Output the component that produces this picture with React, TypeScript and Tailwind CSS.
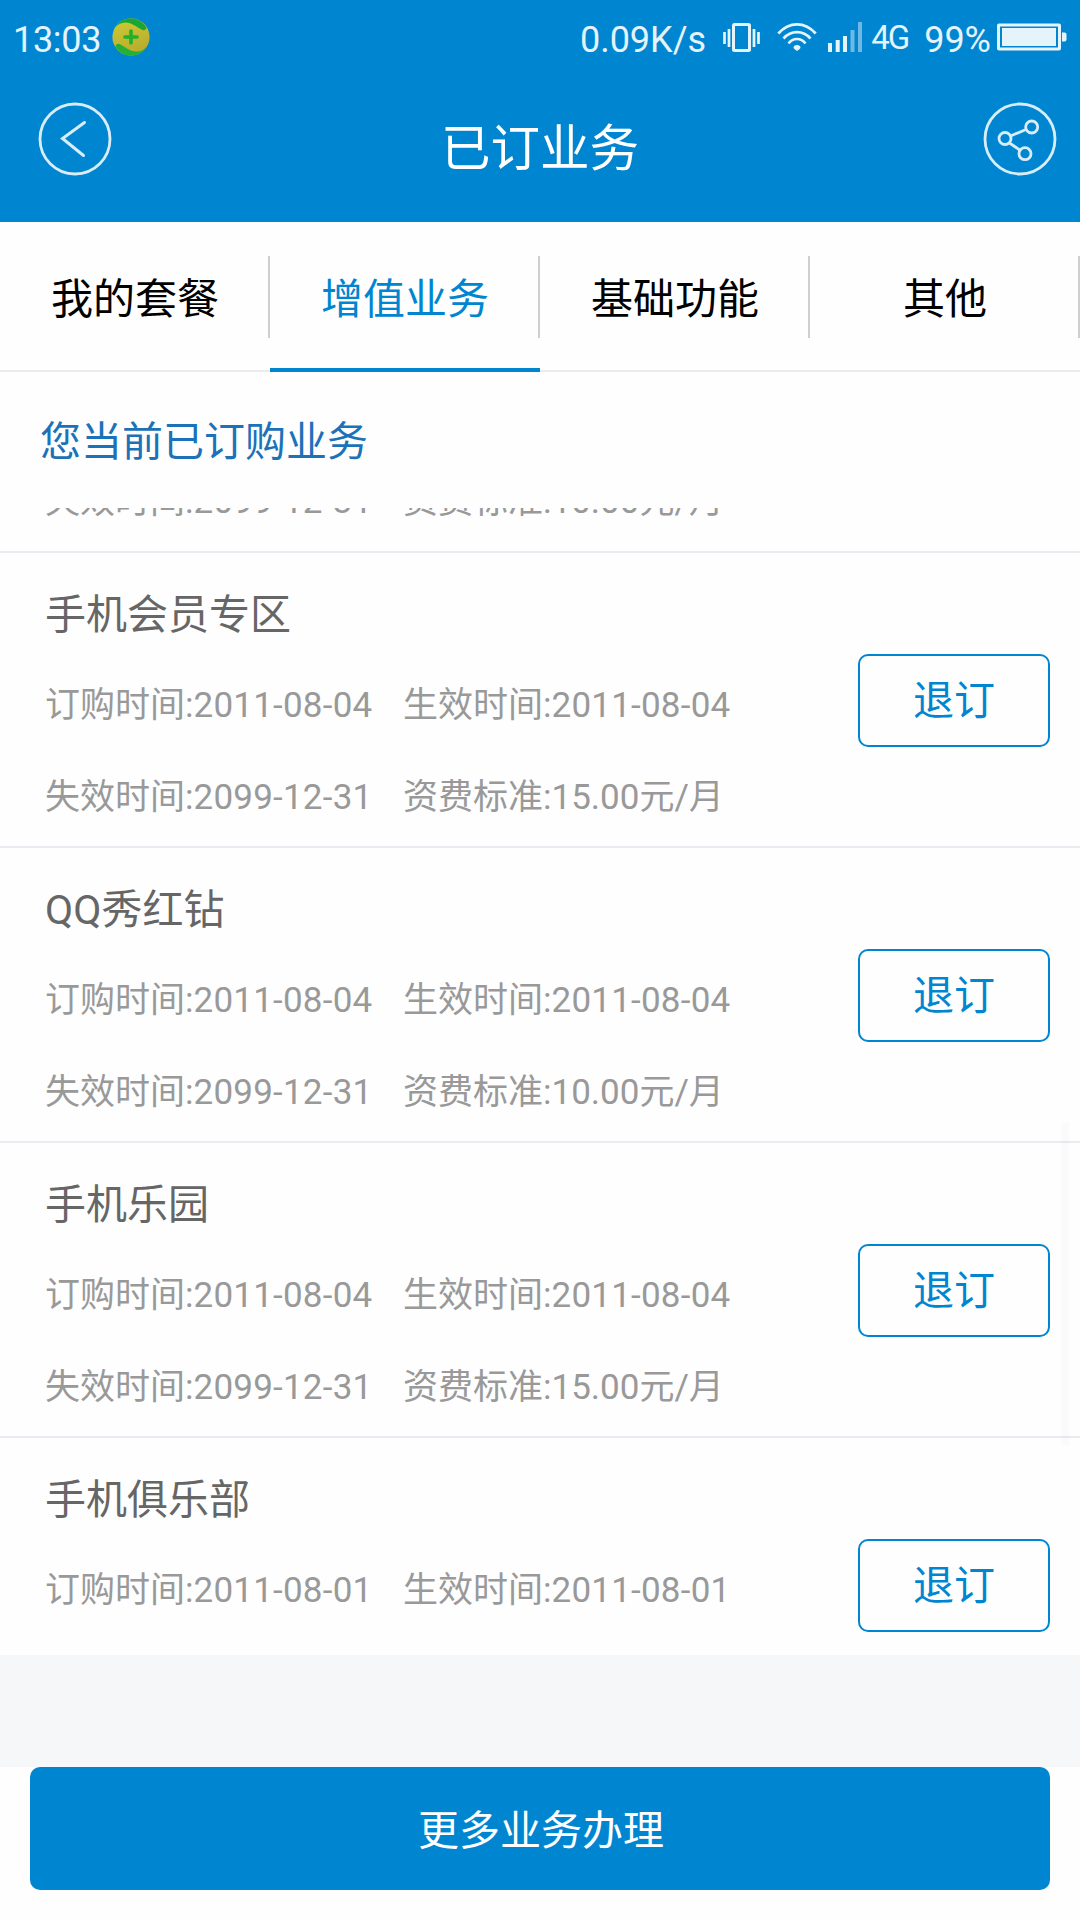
const tabs = ["我的套餐", "增值业务", "基础功能", "其他"]

type Service = {
  name: string
  ordered: string
  effective: string
  expires?: string
  fee?: string
}

const services: Service[] = [
  { name: "手机会员专区", ordered: "2011-08-04", effective: "2011-08-04", expires: "2099-12-31", fee: "15.00元/月" },
  { name: "QQ秀红钻", ordered: "2011-08-04", effective: "2011-08-04", expires: "2099-12-31", fee: "10.00元/月" },
  { name: "手机乐园", ordered: "2011-08-04", effective: "2011-08-04", expires: "2099-12-31", fee: "15.00元/月" },
  { name: "手机俱乐部", ordered: "2011-08-01", effective: "2011-08-01" },
]

function SafetyIcon() {
  return (
    <svg width="38" height="38" viewBox="0 0 38 38" className="ml-[11px]">
      <defs>
        <linearGradient id="gold" x1="0" y1="0" x2="0.4" y2="1">
          <stop offset="0" stopColor="#cfca38" />
          <stop offset="1" stopColor="#b9ad2c" />
        </linearGradient>
      </defs>
      <circle cx="19" cy="19" r="18.6" fill="url(#gold)" />
      <path d="M3 9.500C7 3 13 .4 19 .4c7 0 12.500 3.800 15.500 9.100-.6 2.800-3 3.200-5 2C25 9 20 4.600 13.500 4.400 9 4.300 6 6.500 3 9.500Z" fill="#18a832" />
      <path d="M35 28.500C31 35 25 37.600 19 37.600c-7 0-12.500-3.800-15.500-9.100.6-2.800 3-3.200 5-2C13 29 18 33.400 24.500 33.600c4.500.1 7.500-2.100 10.500-5.100Z" fill="#22b136" />
      <path d="M19 13v12M13 19h12" stroke="#1fb02c" strokeWidth="3.600" strokeLinecap="round" />
    </svg>
  )
}

function VibrateIcon() {
  return (
    <svg width="37" height="30" viewBox="0 0 37 30" className="ml-[17px]">
      <rect x="10.500" y="2.500" width="16" height="26" rx="1" fill="none" stroke="#e5f3fb" strokeWidth="3" />
      <path d="M1.500 10v12M6 7v18M31 7v18M35.500 10v12" stroke="#e5f3fb" strokeWidth="2.700" />
    </svg>
  )
}

function WifiIcon() {
  return (
    <svg width="40" height="30" viewBox="0 0 40 30" className="ml-[17px]">
      <g fill="none" stroke="#e5f3fb" strokeWidth="2.700">
        <path d="M1.300 11.500C12 -.8 28 -.8 38.700 11.500" />
        <path d="M6.500 16.500C14 8 26 8 33.500 16.500" />
        <path d="M11.500 21.500C16 15.500 24 15.500 28.500 21.500" />
      </g>
      <path d="M20 23c2 0 3.500 1 3.500 2.500S21 28 20 29c-1-1-3.500-2-3.500-3.500S18 23 20 23Z" fill="#e5f3fb" />
    </svg>
  )
}

function SignalIcon() {
  return (
    <svg width="34" height="30" viewBox="0 0 34 30" className="ml-[11px]">
      <path d="M0 21h4v9H0zM7.700 18h4v12h-4zM15 14h4v16h-4z" fill="#e5f3fb" />
      <path d="M22.500 8h4v22h-4zM30 0h4v30h-4z" fill="#6fb9e4" />
    </svg>
  )
}

function BatteryIcon() {
  return (
    <svg width="70" height="28" viewBox="0 0 70 28" className="ml-[6px]">
      <rect x="1.500" y="2" width="61" height="24" rx=".5" fill="none" stroke="#e5f3fb" strokeWidth="3" />
      <rect x="5" y="5" width="54" height="18" fill="#e5f3fb" />
      <path d="M65 9.500h2.500q2 0 2 2v5q0 2-2 2H65z" fill="#e5f3fb" />
    </svg>
  )
}

function StatusBar() {
  return (
    <div className="flex h-[74px] items-center justify-between pr-[13px] pl-[13px] text-[36px] leading-none text-[#e5f3fb]">
      <div className="flex items-center">
        <span className="pt-[6px] tracking-[-0.3px]">13:03</span>
        <SafetyIcon />
      </div>
      <div className="flex items-center">
        <span className="pt-[6px]">0.09K/s</span>
        <VibrateIcon />
        <WifiIcon />
        <SignalIcon />
        <span className="ml-[9px] text-[33px] tracking-[-2px]">4G</span>
        <span className="ml-4 pt-[6px]">99%</span>
        <BatteryIcon />
      </div>
    </div>
  )
}

function Header() {
  return (
    <header className="h-[222px] bg-[#0086d1]">
      <StatusBar />
      <div className="grid grid-cols-[74px_1fr_74px] items-start pt-[28px] pr-[23px] pl-[38px]">
        <svg width="74" height="74" viewBox="0 0 74 74" fill="none" stroke="#d9edf8" strokeWidth="2.800" strokeLinecap="round">
          <circle cx="37" cy="37" r="35" />
          <path d="M46.500 20.500 24.500 36.500 45.500 53.500" strokeWidth="3" />
        </svg>
        <h1 className="mt-[15px] mr-[15px] text-center text-[49.500px] leading-[64px] text-white">已订业务</h1>
        <svg width="74" height="74" viewBox="0 0 74 74" fill="none" stroke="#d9edf8" strokeWidth="2.800">
          <circle cx="37" cy="37" r="35" />
          <circle cx="22" cy="36.500" r="6" />
          <circle cx="48.700" cy="25" r="6" />
          <circle cx="42" cy="51.700" r="6" />
          <path d="m27.500 34 15.500-6.500M26.500 41l11 7.500" />
        </svg>
      </div>
    </header>
  )
}

function Tabs() {
  return (
    <nav className="grid h-[150px] grid-cols-4 text-[42px] leading-none text-black">
      {tabs.map((tab, i) => (
        <div
          key={tab}
          className={
            i === 1
              ? "flex flex-col border-b-[4px] border-[#0086d1] pt-[34px] text-[#0086d1]"
              : "flex flex-col border-b-2 border-[#ebebeb] pt-[34px]"
          }
        >
          <span className="flex h-[82px] items-center justify-center border-r-2 border-[#cfcfcf] pt-[6px] pl-[2px]">{tab}</span>
        </div>
      ))}
    </nav>
  )
}

function Details({ items }: { items: string[][] }) {
  return (
    <div className="grid grid-cols-[358px_auto] text-[35px] leading-[92px] text-[#999]">
      {items.map(([label, value]) => (
        <span key={label}>
          {label}:<span className={value.includes("-") ? "tracking-[0.22px]" : ""}>{value}</span>
        </span>
      ))}
    </div>
  )
}

function ServiceRow({ service }: { service: Service }) {
  const items = [
    ["订购时间", service.ordered],
    ["生效时间", service.effective],
  ]
  if (service.expires && service.fee) {
    items.push(["失效时间", service.expires], ["资费标准", service.fee])
  }

  return (
    <li className="flex h-[295px] items-start justify-between border-b-2 border-[#e8ecf0] pr-[30px] pl-[45px]">
      <div>
        <h2 className="mt-[32px] mb-[15px] text-[41px] leading-[60px] text-[#666]">{service.name}</h2>
        <Details items={items} />
      </div>
      <button className="mt-[101px] h-[93px] w-[192px] rounded-[10px] border-2 border-[#0086d1] pt-[2px] text-[41px] leading-none text-[#0086d1]">
        退订
      </button>
    </li>
  )
}

export default function App() {
  return (
    <div className="flex h-[1920px] w-[1080px] flex-col overflow-hidden bg-[#fefefe] font-['Roboto','Noto_Sans_CJK_SC',sans-serif]">
      <Header />
      <Tabs />
      <p className="h-[136px] pt-[40px] pl-[40px] text-[41px] leading-[60px] text-[#1b72b9]">您当前已订购业务</p>

      {/* List, scrolled part of the way down */}
      <div className="relative h-[1147px] overflow-hidden">
        <ul>
          <li className="flex h-[45px] items-end overflow-hidden border-b-2 border-[#e8ecf0] pb-[3px] pl-[45px]">
            <Details items={[["失效时间", "2099-12-31"], ["资费标准", "10.00元/月"]]} />
          </li>
          {services.map((s) => (
            <ServiceRow key={s.name} service={s} />
          ))}
        </ul>
        <div className="absolute top-[615px] right-[11px] h-[322px] w-2 bg-black/[0.015]" />
      </div>

      <div className="h-[112px] bg-[#f5f7f9]" />
      <button className="mx-[30px] h-[123px] rounded-[10px] bg-[#0086d1] pt-[5px] pl-[2px] text-[41px] leading-none text-white">
        更多业务办理
      </button>
    </div>
  )
}
